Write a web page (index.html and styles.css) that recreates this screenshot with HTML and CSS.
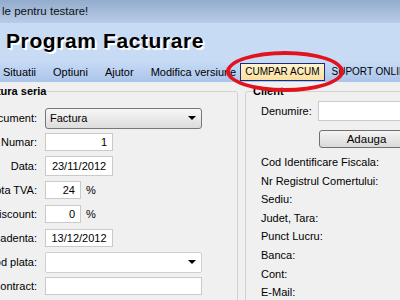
FILE: index.html
```html
<!DOCTYPE html>
<html>
<head>
<meta charset="utf-8">
<link rel="stylesheet" href="styles.css">
</head>
<body>
<div class="titlebar">le pentru testare!</div>
<div class="header"><h1>Program Facturare</h1></div>
<div class="menubar">
  <span class="mi">Situatii</span>
  <span class="mi">Optiuni</span>
  <span class="mi">Ajutor</span>
  <span class="mi">Modifica versiune</span>
  <span class="mi buy">CUMPAR ACUM</span>
  <span class="mi support">SUPORT ONLINE</span>
  <div class="ellipse"></div>
</div>
<div class="content">
  <fieldset class="group left">
    <legend>Factura seria</legend>
    <div class="form">
      <span class="lbl">Tip document:</span>
      <div class="combo"><span>Factura</span><i class="arrow"></i></div>
      <span class="lbl">Numar:</span>
      <div class="field w68 num">1</div>
      <span class="lbl">Data:</span>
      <div class="field w68 tall date">23/11/2012</div>
      <span class="lbl">Cota TVA:</span>
      <div class="pct"><div class="field w36 num">24</div><span>%</span></div>
      <span class="lbl">Discount:</span>
      <div class="pct"><div class="field w36 num">0</div><span>%</span></div>
      <span class="lbl">Scadenta:</span>
      <div class="field w68 date">13/12/2012</div>
      <span class="lbl">Mod plata:</span>
      <div class="combo plain"><span></span><i class="arrow"></i></div>
      <span class="lbl">Contract:</span>
      <div class="field w157"></div>
    </div>
  </fieldset>
  <fieldset class="group right">
    <legend>Client</legend>
    <div class="client">
      <div class="crow"><span class="clbl">Denumire:</span><div class="field cname"></div></div>
      <div class="btn">Adauga</div>
      <ul class="info">
        <li>Cod Identificare Fiscala:</li>
        <li>Nr Registrul Comertului:</li>
        <li>Sediu:</li>
        <li>Judet, Tara:</li>
        <li>Punct Lucru:</li>
        <li>Banca:</li>
        <li>Cont:</li>
        <li>E-Mail:</li>
      </ul>
    </div>
  </fieldset>
</div>
</body>
</html>
```
FILE: styles.css
```css
* { box-sizing: border-box; }
html, body {
  margin: 0;
  width: 400px;
  height: 300px;
  overflow: hidden;
}
body {
  font-family: "Liberation Sans", Arial, sans-serif;
  font-size: 11px;
  color: #000;
  background: #f0f0f0;
}
.titlebar {
  height: 23px;
  line-height: 23px;
  padding-left: 2px;
  font-size: 11.5px;
  color: #111;
  background: linear-gradient(#93accd, #b8cce6);
  white-space: nowrap;
}
.header {
  height: 39px;
  background: #c7dbf5;
}
.header h1 {
  margin: 0;
  padding: 6px 0 0 6px;
  font-family: "Liberation Sans", Arial, sans-serif;
  font-weight: bold;
  font-size: 21px;
  line-height: 24px;
  letter-spacing: 0.6px;
  text-shadow: 1px 1px 0 #fff, 2px 2px 0 #fff;
  white-space: nowrap;
}
.menubar {
  position: relative;
  height: 20px;
  display: flex;
  align-items: center;
  gap: 17px;
  padding-left: 3px;
  background: linear-gradient(#c6daf5, #aac4ea);
  white-space: nowrap;
}
.mi { line-height: 18px; }
.buy {
  margin-left: -13px;
  height: 18px;
  padding: 0 4px;
  font-size: 10px;
  line-height: 16px;
  border: 1px solid #1d2b78;
  background: linear-gradient(#fff4d2, #fbdf9e);
}
.support { margin-left: -10px; font-size: 10px; }
.ellipse {
  position: absolute;
  left: 226px;
  top: -11px;
  width: 118px;
  height: 41px;
  border: 4px solid #e3131d;
  border-radius: 50%;
  pointer-events: none;
}
.content {
  display: flex;
  gap: 7px;
  padding-top: 3px;
}
.group {
  margin: 0;
  min-width: 0;
  border: 1px solid #d3d3cb;
  border-radius: 3px;
  height: 240px;
}
.group legend {
  padding: 0;
  font-weight: bold;
  font-size: 11px;
  line-height: 13px;
}
.left {
  margin-left: -35px;
  width: 273px;
  flex: none;
  padding: 8px 0 0 1px;
}
.left legend { margin-left: 11px; }
.form {
  display: grid;
  grid-template-columns: 70px auto;
  grid-auto-rows: 24px;
  column-gap: 8px;
  align-items: center;
  justify-items: start;
}
.lbl { justify-self: end; white-space: nowrap; }
.field {
  height: 18px;
  border: 1px solid #cacaca;
  background: #fff;
  line-height: 16px;
  padding: 0 5px;
  white-space: nowrap;
}
.tall { height: 20px; line-height: 18px; }
.w68 { width: 68px; }
.w36 { width: 36px; }
.w157 { width: 157px; }
.num { text-align: right; }
.date { text-align: center; padding: 0; }
.pct { display: flex; align-items: center; gap: 5px; }
.combo {
  width: 157px;
  height: 21px;
  border: 1px solid #777;
  border-radius: 3px;
  background: linear-gradient(#f7f7f7, #dcdcdc);
  display: flex;
  align-items: center;
  justify-content: space-between;
  padding: 0 5px 0 4px;
}
.combo.plain {
  background: #fff;
  border-color: #cfcfcf;
  border-radius: 2px;
}
.arrow {
  width: 0;
  height: 0;
  border-left: 4px solid transparent;
  border-right: 4px solid transparent;
  border-top: 4px solid #000;
}
.right {
  width: 200px;
  flex: none;
  padding: 0 0 0 7px;
}
.right legend { margin-left: 0; }
.client { padding: 3px 0 0 8px; }
.crow { display: flex; align-items: center; height: 20px; }
.clbl { width: 57px; }
.cname { width: 110px; height: 20px; }
.btn {
  margin: 9px 0 0 58px;
  width: 95px;
  height: 18px;
  border: 1px solid #707070;
  border-radius: 3px;
  background: linear-gradient(#f4f4f4, #d9d9d9);
  text-align: center;
  line-height: 16px;
  font-size: 11.5px;
}
.info {
  list-style: none;
  margin: 5px 0 0 0;
  padding: 0;
}
.info li {
  height: 18.6px;
  line-height: 18.6px;
  white-space: nowrap;
}
```
